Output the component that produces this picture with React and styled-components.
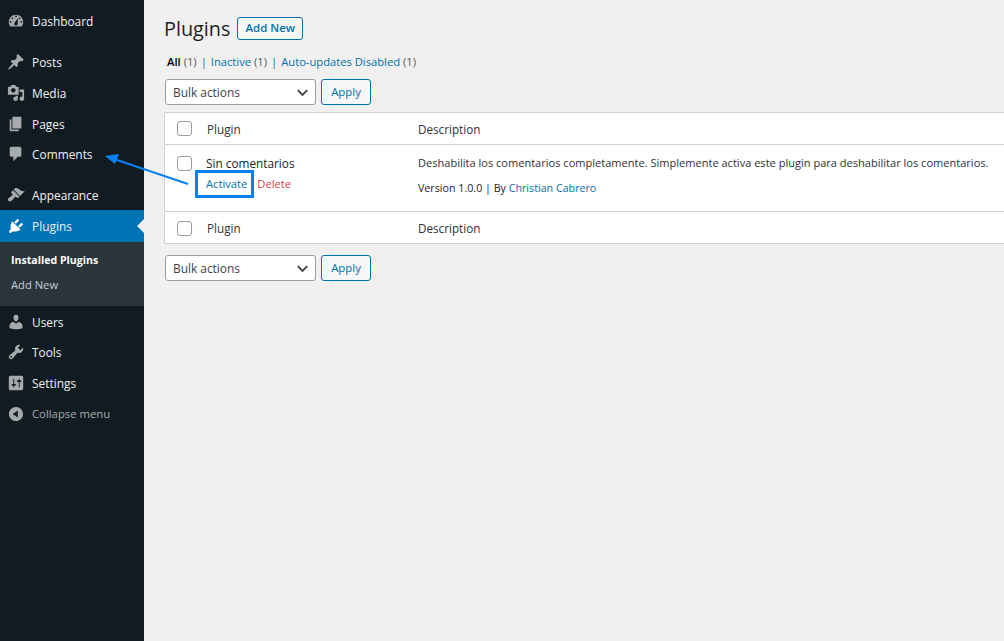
import styled, { createGlobalStyle } from 'styled-components'

const GlobalStyle = createGlobalStyle`
  html, body {
    margin: 0;
    height: 100%;
    overflow: hidden;
    background: #f0f0f1;
  }
  body {
    font-family: "Open Sans", "Noto Sans", sans-serif;
    font-size: 11.7px;
    color: #3c434a;
  }
  * { box-sizing: border-box; }
`

const Page = styled.div`
  position: relative;
  display: flex;
  width: 1004px;
  height: 641px;
  overflow: hidden;
`

const Sidebar = styled.nav`
  flex: 0 0 144px;
  background: #111c22;
  padding-top: 5.9px;
`

const MenuItem = styled.div`
  display: flex;
  align-items: center;
  height: ${(p) => (p.$current ? '32px' : '30.6px')};
  margin-bottom: ${(p) => (p.$gap ? '10.4px' : '0')};
  padding: ${(p) => (p.$current ? '0' : '0.6px')} 0 0 7px;
  position: relative;
  color: ${(p) => (p.$muted ? '#a7aaad' : '#f0f0f1')};
  background: ${(p) => (p.$current ? '#0073b5' : 'transparent')};
  font-size: ${(p) => (p.$muted ? '11.3px' : '11.9px')};

  svg {
    flex: 0 0 18px;
    width: 18px;
    height: 18px;
    fill: ${(p) => (p.$current ? '#fff' : '#a7aaad')};
    margin-right: 7px;
  }
`

const CurrentNotch = styled.span`
  position: absolute;
  right: 0;
  top: 9px;
  border: 7px solid transparent;
  border-left: 0;
  border-right-color: #f0f0f1;
`

const SubMenu = styled.div`
  background: #2a343b;
  height: 64px;
  padding: 6px 0 0 11px;
`

const SubItem = styled.div`
  height: ${(p) => (p.$active ? '25px' : '24px')};
  line-height: ${(p) => (p.$active ? '25px' : '24px')};
  font-size: ${(p) => (p.$active ? '10.6px' : '11.2px')};
  font-weight: ${(p) => (p.$active ? 700 : 400)};
  color: ${(p) => (p.$active ? '#fff' : '#c3cfd9')};
`

const Main = styled.main`
  flex: 1;
  min-width: 0;
  padding: 15px 0 0 20px;
`

const TitleRow = styled.div`
  display: flex;
  align-items: center;
  gap: 7px;
  height: 26px;
`

const Title = styled.h1`
  margin: 0;
  font-size: 19.8px;
  font-weight: 400;
  color: #1d2327;
`

const AddNew = styled.button`
  height: 23px;
  width: 66px;
  padding: 0 0 1px;
  font: 600 11.4px "Open Sans", sans-serif;
  color: #0071a8;
  background: #f6f7f7;
  border: 1px solid #0071a8;
  border-radius: 3px;
`

const Filters = styled.div`
  display: flex;
  align-items: center;
  height: 16px;
  margin: 12px 0 0 3px;
  font-size: 11.2px;
  color: #646970;
`

const FilterLink = styled.span`
  color: ${(p) => (p.$current ? '#000' : '#0071a8')};
  font-weight: ${(p) => (p.$current ? 600 : 400)};
`

const Count = styled.span`
  margin-left: 3px;
  color: #50575e;
`

const Sep = styled.span`
  margin: 0 4px;
  color: #0071a8;
`

const Actions = styled.div`
  display: flex;
  gap: 5px;
  height: 26px;
  margin: ${(p) => (p.$bottom ? '11px' : '10px')} 0 7px 1px;
`

const BulkSelect = styled.div`
  display: flex;
  align-items: center;
  justify-content: space-between;
  width: 151px;
  padding: 0 6px 0 7px;
  font-size: 11.9px;
  color: #3c434a;
  background: #fff;
  border: 1px solid #9a9da0;
  border-radius: 3px;

  svg {
    width: 13px;
    height: 13px;
    stroke: #3c434a;
    stroke-width: 2;
    fill: none;
  }
`

const Apply = styled.button`
  width: 50px;
  padding: 0 0 2px;
  font: 400 11.4px "Open Sans", sans-serif;
  color: #0071a8;
  background: #f6f7f7;
  border: 1px solid #0071a8;
  border-radius: 3px;
`

const Table = styled.table`
  width: 860px;
  table-layout: fixed;
  border-collapse: separate;
  border-spacing: 0;
  background: #fff;
  border: 1px solid #cfd0d2;
  border-right: 0;
`

const HeadCell = styled.td`
  height: 32px;
  padding: ${(p) => (p.$foot ? '1px' : '0')} 0 0 ${(p) => p.$pad || 0}px;
  vertical-align: middle;
  font-size: 11.7px;
  color: #2c3338;
  border-${(p) => (p.$foot ? 'top' : 'bottom')}: 1px solid #cfd0d2;
`

const BodyCell = styled.td`
  height: 66px;
  padding: ${(p) => p.$top || 0}px 0 0 ${(p) => p.$pad || 0}px;
  vertical-align: top;
  position: relative;
`

const Check = styled.span`
  display: block;
  width: 15px;
  height: 15px;
  background: #fff;
  border: 1px solid #9a9da0;
  border-radius: 3px;
`

const PluginName = styled.div`
  font-size: 11.8px;
  color: #1d2327;
  line-height: 16px;
`

const RowActions = styled.div`
  display: flex;
  gap: 10px;
  margin-top: 5px;
  font-size: 11.2px;
  line-height: 16px;
`

const ActivateLink = styled.span`
  color: #0071a8;
`

const DeleteLink = styled.span`
  color: #dc3f45;
`

const Desc = styled.p`
  margin: 0;
  font-size: 11.05px;
  line-height: 16px;
  white-space: nowrap;
  color: #2c3338;
`

const Meta = styled(Desc)`
  margin-top: 9px;
  font-size: 10.7px;
  color: #1d2327;

  a {
    color: #0071a8;
    text-decoration: none;
  }
`

const Highlight = styled.span`
  position: absolute;
  left: 195px;
  top: 170px;
  width: 59px;
  height: 28px;
  border: 3px solid #0a80f5;
  pointer-events: none;
`

const ArrowOverlay = styled.svg`
  position: absolute;
  left: 100px;
  top: 150px;
  width: 90px;
  height: 40px;
  pointer-events: none;
`

const icons = {
  dashboard: 'M3.76 16h12.48c1.1-1.37 1.76-3.11 1.76-5 0-4.42-3.58-8-8-8s-8 3.58-8 8c0 1.89.66 3.63 1.76 5zM10 4c.55 0 1 .45 1 1s-.45 1-1 1-1-.45-1-1 .45-1 1-1zM6 6c.55 0 1 .45 1 1s-.45 1-1 1-1-.45-1-1 .45-1 1-1zm8 0c.55 0 1 .45 1 1s-.45 1-1 1-1-.45-1-1 .45-1 1-1zm-5.37 5.55L12 7v6c0 1.1-.9 2-2 2s-2-.9-2-2c0-.57.24-1.08.63-1.45zM4 10c.55 0 1 .45 1 1s-.45 1-1 1-1-.45-1-1 .45-1 1-1zm12 0c.55 0 1 .45 1 1s-.45 1-1 1-1-.45-1-1 .45-1 1-1z',
  posts: 'M10.44 3.02l1.82-1.82 6.36 6.35-1.83 1.82c-1.05-.68-2.48-.57-3.41.36l-.75.75c-.92.93-1.04 2.35-.35 3.41l-1.83 1.82-2.41-2.41-2.8 2.79c-.42.42-3.38 2.71-3.8 2.29s1.86-3.39 2.28-3.81l2.79-2.79L4.1 9.36l1.83-1.82c1.05.69 2.48.57 3.4-.36l.75-.75c.93-.92 1.05-2.35.36-3.41z',
  media: 'M13 11V4c0-.55-.45-1-1-1h-1.67L9 1H5L3.67 3H2c-.55 0-1 .45-1 1v7c0 .55.45 1 1 1h10c.55 0 1-.45 1-1zM7 4.5c1.38 0 2.5 1.12 2.5 2.5S8.38 9.5 7 9.5 4.5 8.38 4.5 7 5.62 4.5 7 4.5zM14 6h5v10.5c0 1.38-1.12 2.5-2.5 2.5S14 17.88 14 16.5s1.12-2.5 2.5-2.5c.17 0 .34.02.5.05V9h-3V6zm-4 8.05V13h2v3.5c0 1.38-1.12 2.5-2.5 2.5S7 17.88 7 16.5 8.12 14 9.5 14c.17 0 .34.02.5.05z',
  pages: 'M6 15V2h10v13H6zm-1 1h8v2H3V5h2v11z',
  comments: 'M5 2h9c1.1 0 2 .9 2 2v7c0 1.1-.9 2-2 2h-2l-5 5v-5H5c-1.1 0-2-.9-2-2V4c0-1.1.9-2 2-2z',
  appearance: 'M14.48 11.06L7.41 3.99l1.5-1.5c.5-.56 2.3-.47 3.51.32 1.21.8 1.43 1.28 2.91 2.1 1.18.64 2.45 1.26 4.45.85zm-.71.71L6.7 4.7 4.93 6.47c-.39.39-.39 1.02 0 1.41l1.06 1.06c.39.39.39 1.03 0 1.42-.6.6-1.43 1.11-2.21 1.69-.35.26-.7.53-1.01.84C1.43 13.23.75 14.57 1.1 15.72c.06.2.17.38.31.53l.44.44c.15.15.33.26.53.31 1.15.35 2.49-.33 3.83-1.67.31-.31.58-.66.84-1.01.58-.78 1.09-1.61 1.69-2.21.39-.39 1.03-.39 1.42 0l1.06 1.06c.39.39 1.02.39 1.41 0z',
  plugins: 'M13.11 4.36L9.87 7.6 8 5.73l3.24-3.24c.35-.34 1.05-.2 1.56.32.52.51.66 1.21.31 1.55zm-8 1.77l.91-1.12 9.01 9.01-1.19.84c-.71.71-2.63 1.16-3.82 1.16H6.14L4.9 17.26c-.59.59-1.54.59-2.12 0-.59-.58-.59-1.53 0-2.12l1.24-1.24v-3.88c0-1.13.4-3.19 1.09-3.89zm7.26 3.97l3.24-3.24c.34-.35 1.04-.21 1.55.31.52.51.66 1.21.31 1.55l-3.24 3.25z',
  users: 'M10 9.25c-2.27 0-2.73-3.44-2.73-3.44C7 4.02 7.82 2 9.97 2c2.16 0 2.98 2.02 2.71 3.81 0 0-.41 3.44-2.68 3.44zm0 2.57L12.72 10c2.39 0 4.52 2.33 4.52 4.53v2.49s-3.65 1.13-7.24 1.13c-3.65 0-7.24-1.13-7.24-1.13v-2.49c0-2.25 1.94-4.48 4.47-4.48z',
  tools: 'M16.68 9.77c-1.34 1.34-3.3 1.67-4.95.99l-5.41 6.52c-.99.99-2.59.99-3.58 0s-.99-2.59 0-3.57l6.52-5.42c-.68-1.65-.35-3.61.99-4.95 1.28-1.28 3.12-1.62 4.72-1.06l-2.89 2.89 2.82 2.82 2.86-2.87c.53 1.58.18 3.39-1.08 4.65zM3.81 16.21c.4.39 1.04.39 1.43 0 .4-.4.4-1.04 0-1.43-.39-.4-1.03-.4-1.43 0-.39.39-.39 1.03 0 1.43z',
  settings: 'M18 16V4c0-1.1-.9-2-2-2H4c-1.1 0-2 .9-2 2v12c0 1.1.9 2 2 2h12c1.1 0 2-.9 2-2zM8 11h1c.55 0 1 .45 1 1s-.45 1-1 1H8v1.5c0 .28-.22.5-.5.5s-.5-.22-.5-.5V13H6c-.55 0-1-.45-1-1s.45-1 1-1h1V5.5c0-.28.22-.5.5-.5s.5.22.5.5V11zm5-2h-1c-.55 0-1-.45-1-1s.45-1 1-1h1V5.5c0-.28.22-.5.5-.5s.5.22.5.5V7h1c.55 0 1 .45 1 1s-.45 1-1 1h-1v5.5c0 .28-.22.5-.5.5s-.5-.22-.5-.5V9z',
  collapse: 'M10 2.16c4.33 0 7.84 3.51 7.84 7.84s-3.51 7.84-7.84 7.84S2.16 14.33 2.16 10 5.71 2.16 10 2.16zm2 11.72V6.12L6.18 9.97z',
}

const Icon = ({ name }) => (
  <svg viewBox="0 0 20 20">
    <path d={icons[name]} />
  </svg>
)

const Item = ({ icon, label, ...rest }) => (
  <MenuItem {...rest}>
    <Icon name={icon} />
    {label}
    {rest.$current && <CurrentNotch />}
  </MenuItem>
)

const Bulk = () => (
  <BulkSelect>
    Bulk actions
    <svg viewBox="0 0 14 14">
      <path d="M2 4.5 7 9.5 12 4.5" />
    </svg>
  </BulkSelect>
)

const HeadRow = ({ foot }) => (
  <tr>
    <HeadCell $foot={foot} $pad={12}>
      <Check />
    </HeadCell>
    <HeadCell $foot={foot} $pad={1}>Plugin</HeadCell>
    <HeadCell $foot={foot}>Description</HeadCell>
  </tr>
)

export default function App() {
  return (
    <Page>
      <GlobalStyle />
      <Sidebar>
        <Item icon="dashboard" label="Dashboard" $gap />
        <Item icon="posts" label="Posts" />
        <Item icon="media" label="Media" />
        <Item icon="pages" label="Pages" />
        <Item icon="comments" label="Comments" $gap />
        <Item icon="appearance" label="Appearance" />
        <Item icon="plugins" label="Plugins" $current />
        <SubMenu>
          <SubItem $active>Installed Plugins</SubItem>
          <SubItem>Add New</SubItem>
        </SubMenu>
        <Item icon="users" label="Users" />
        <Item icon="tools" label="Tools" />
        <Item icon="settings" label="Settings" />
        <Item icon="collapse" label="Collapse menu" $muted />
      </Sidebar>

      <Main>
        <TitleRow>
          <Title>Plugins</Title>
          <AddNew>Add New</AddNew>
        </TitleRow>

        <Filters>
          <FilterLink $current>All</FilterLink>
          <Count>(1)</Count>
          <Sep>|</Sep>
          <FilterLink>Inactive</FilterLink>
          <Count>(1)</Count>
          <Sep>|</Sep>
          <FilterLink>Auto-updates Disabled</FilterLink>
          <Count>(1)</Count>
        </Filters>

        <Actions>
          <Bulk />
          <Apply>Apply</Apply>
        </Actions>

        <Table>
          <colgroup>
            <col style={{ width: 41 }} />
            <col style={{ width: 212 }} />
            <col />
          </colgroup>
          <tbody>
            <HeadRow />
            <tr>
              <BodyCell $pad={12} $top={11}>
                <Check />
              </BodyCell>
              <BodyCell $top={10}>
                <PluginName>Sin comentarios</PluginName>
                <RowActions>
                  <ActivateLink>Activate</ActivateLink>
                  <DeleteLink>Delete</DeleteLink>
                </RowActions>
              </BodyCell>
              <BodyCell $top={10}>
                <Desc>Deshabilita los comentarios completamente. Simplemente activa este plugin para deshabilitar los comentarios.</Desc>
                <Meta>
                  Version 1.0.0 | By <a href="#author">Christian Cabrero</a>
                </Meta>
              </BodyCell>
            </tr>
            <HeadRow foot />
          </tbody>
        </Table>

        <Actions $bottom>
          <Bulk />
          <Apply>Apply</Apply>
        </Actions>
      </Main>

      <Highlight />
      <ArrowOverlay viewBox="0 0 90 40">
        <line x1="88" y1="34" x2="14" y2="9" stroke="#0a80f5" strokeWidth="2" />
        <polygon points="5,6 19,4 15,14" fill="#0a80f5" />
      </ArrowOverlay>
    </Page>
  )
}
